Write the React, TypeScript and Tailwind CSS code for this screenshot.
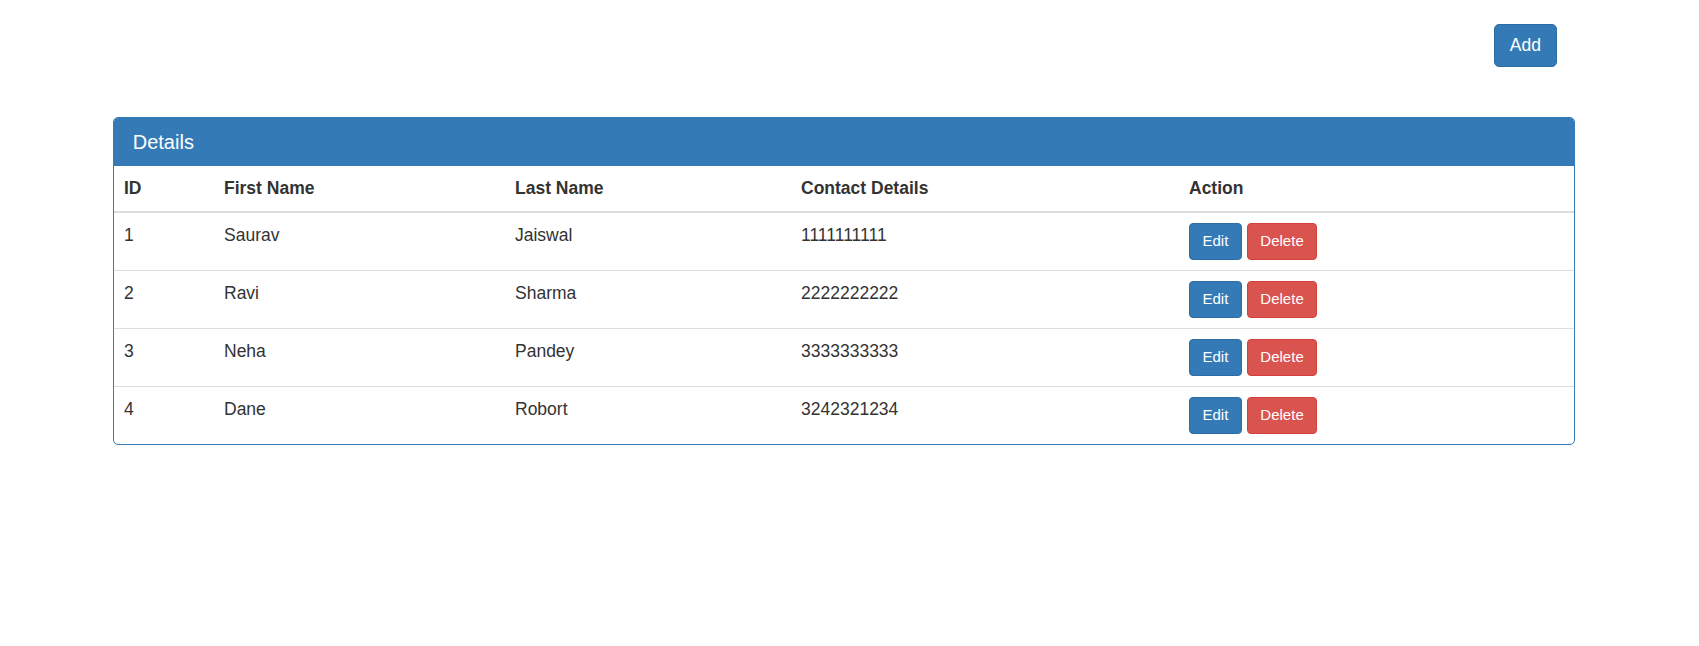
import React from "react";

const rows = [
  { id: 1, first: "Saurav", last: "Jaiswal", contact: "1111111111" },
  { id: 2, first: "Ravi", last: "Sharma", contact: "2222222222" },
  { id: 3, first: "Neha", last: "Pandey", contact: "3333333333" },
  { id: 4, first: "Dane", last: "Robort", contact: "3242321234" },
];

export default function App() {
  return (
    <div className="min-h-[646px] bg-white font-['Liberation_Sans',Arial,sans-serif] text-[17.5px] leading-[25px] text-[#333]">
      <div className="flex justify-end pt-[24px] pr-[142px]">
        <button className="rounded-[5px] border border-[#2e6da4] bg-[#337ab7] px-[15px] py-[8px] text-[17.5px] leading-[25px] text-white">
          Add
        </button>
      </div>
      <div className="ml-[113px] mt-[50px] w-[1462px] overflow-hidden rounded-[5px] border border-[#337ab7]">
        <div className="border-b border-[#337ab7] bg-[#337ab7] px-[18.75px] py-[12.5px]">
          <h3 className="text-[20px] leading-[22px] text-white">Details</h3>
        </div>
        <table className="w-full table-fixed border-collapse">
          <thead>
            <tr>
              <th className="w-[100px] border-b-2 border-[#ddd] p-[10px] text-left font-bold">ID</th>
              <th className="w-[291px] border-b-2 border-[#ddd] p-[10px] text-left font-bold">First Name</th>
              <th className="w-[286px] border-b-2 border-[#ddd] p-[10px] text-left font-bold">Last Name</th>
              <th className="w-[388px] border-b-2 border-[#ddd] p-[10px] text-left font-bold">Contact Details</th>
              <th className="border-b-2 border-[#ddd] p-[10px] text-left font-bold">Action</th>
            </tr>
          </thead>
          <tbody>
            {rows.map((r, i) => (
              <tr key={r.id} className={i === 0 ? "" : "border-t border-[#ddd]"}>
                <td className="p-[10px] align-top">{r.id}</td>
                <td className="p-[10px] align-top">{r.first}</td>
                <td className="p-[10px] align-top">{r.last}</td>
                <td className="p-[10px] align-top">{r.contact}</td>
                <td className="p-[10px] align-top">
                  <div className="flex gap-[5px]">
                    <button className="rounded-[4px] border border-[#2e6da4] bg-[#337ab7] px-[12.5px] py-[6.25px] text-[15px] leading-[22.5px] text-white">
                      Edit
                    </button>
                    <button className="rounded-[4px] border border-[#d43f3a] bg-[#d9534f] px-[12.5px] py-[6.25px] text-[15px] leading-[22.5px] text-white">
                      Delete
                    </button>
                  </div>
                </td>
              </tr>
            ))}
          </tbody>
        </table>
      </div>
    </div>
  );
}
